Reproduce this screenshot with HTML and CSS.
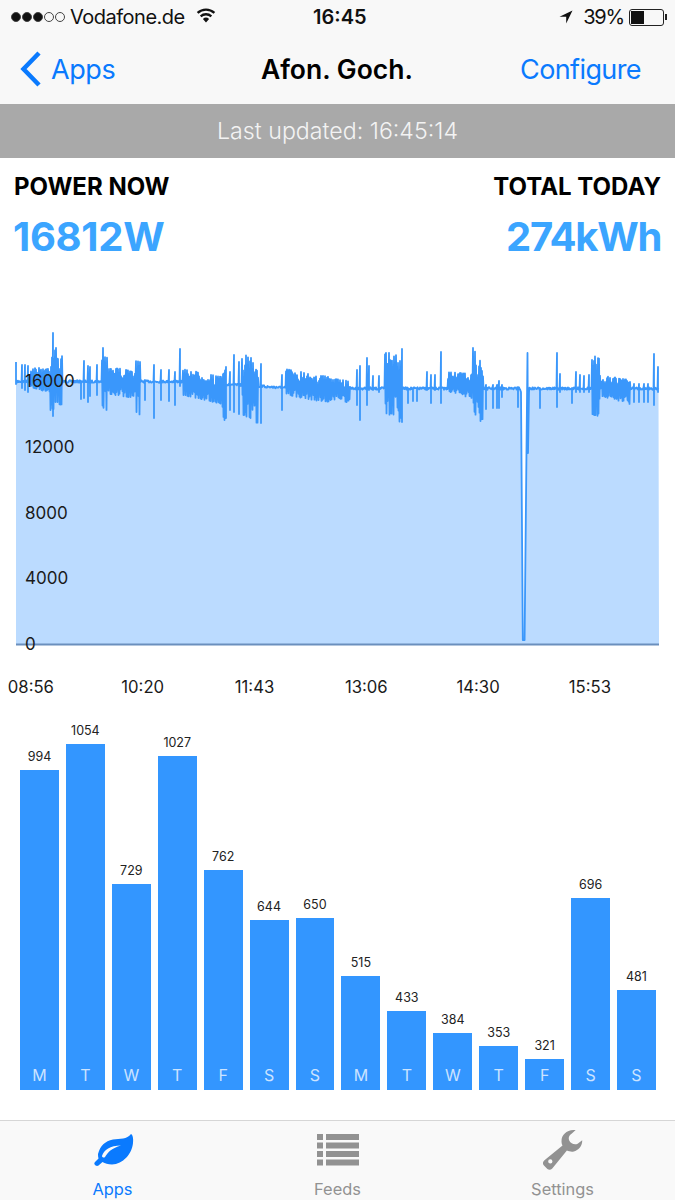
FILE: index.html
```html
<!DOCTYPE html>
<html lang="en">
<head>
    <meta charset="UTF-8">
    <meta name="viewport" content="width=device-width, initial-scale=1.0">
    <title>Afon. Goch.</title>
    <link rel="stylesheet" href="styles.css">
</head>
<body>
    <div class="screen">
        <header class="top-bar">
            <div class="status-bar">
                <div class="status-left">
                    <span class="signal"><i class="on"></i><i class="on"></i><i class="on"></i><i></i><i></i></span>
                    <span class="carrier">Vodafone.de</span>
                    <svg class="wifi" viewBox="0 0 20 15"><path d="M10 14.500 6.900 10.900a4.600 4.600 0 0 1 6.200 0zM5.400 9.200 3.900 7.500a9 9 0 0 1 12.200 0l-1.500 1.700a6.800 6.800 0 0 0-9.200 0zM2.400 5.800 .8 4a13.600 13.600 0 0 1 18.400 0l-1.600 1.800a11.300 11.300 0 0 0-15.200 0z"/></svg>
                </div>
                <div class="status-time">16:45</div>
                <div class="status-right">
                    <svg class="arrow" viewBox="0 0 14 14"><path d="M13.500 .5 .5 6.800h6.700v6.700z"/></svg>
                    <span>39%</span>
                    <span class="battery"><span class="battery-level"></span></span>
                </div>
            </div>
            <nav class="nav-bar">
                <a class="nav-back">
                    <svg class="chevron" viewBox="0 0 22 36"><path d="M19 2 3.500 18 19 34"/></svg>
                    <span>Apps</span>
                </a>
                <h1 class="nav-title">Afon. Goch.</h1>
                <a class="nav-action">Configure</a>
            </nav>
        </header>

        <div class="updated">Last updated: 16:45:14</div>

        <section class="stats">
            <div class="stat">
                <div class="stat-label">POWER NOW</div>
                <div class="stat-value">16812W</div>
            </div>
            <div class="stat stat-right">
                <div class="stat-label">TOTAL TODAY</div>
                <div class="stat-value">274kWh</div>
            </div>
        </section>

        <section class="power-chart">
            <svg class="power-svg" viewBox="0 325 675 325">
                <path id="powerArea" class="power-area"></path>
                <path id="powerLine" class="power-line"></path>
                <path class="power-axis" d="M16 644.500H659"></path>
            </svg>
            <span class="y-label y-16000">16000</span>
            <span class="y-label y-12000">12000</span>
            <span class="y-label y-8000">8000</span>
            <span class="y-label y-4000">4000</span>
            <span class="y-label y-0">0</span>
        </section>

        <div class="x-axis">
            <span>08:56</span>
            <span>10:20</span>
            <span>11:43</span>
            <span>13:06</span>
            <span>14:30</span>
            <span>15:53</span>
        </div>

        <section class="bars">
            <div class="bar-col"><span class="bar-value">994</span><div class="bar" style="height: 320px">M</div></div>
            <div class="bar-col"><span class="bar-value">1054</span><div class="bar" style="height: 346px">T</div></div>
            <div class="bar-col"><span class="bar-value">729</span><div class="bar" style="height: 206px">W</div></div>
            <div class="bar-col"><span class="bar-value">1027</span><div class="bar" style="height: 334px">T</div></div>
            <div class="bar-col"><span class="bar-value">762</span><div class="bar" style="height: 220px">F</div></div>
            <div class="bar-col"><span class="bar-value">644</span><div class="bar" style="height: 170px">S</div></div>
            <div class="bar-col"><span class="bar-value">650</span><div class="bar" style="height: 172px">S</div></div>
            <div class="bar-col"><span class="bar-value">515</span><div class="bar" style="height: 114px">M</div></div>
            <div class="bar-col"><span class="bar-value">433</span><div class="bar" style="height: 79px">T</div></div>
            <div class="bar-col"><span class="bar-value">384</span><div class="bar" style="height: 57px">W</div></div>
            <div class="bar-col"><span class="bar-value">353</span><div class="bar" style="height: 44px">T</div></div>
            <div class="bar-col"><span class="bar-value">321</span><div class="bar" style="height: 31px">F</div></div>
            <div class="bar-col"><span class="bar-value">696</span><div class="bar" style="height: 192px">S</div></div>
            <div class="bar-col"><span class="bar-value">481</span><div class="bar" style="height: 100px">S</div></div>
        </section>

        <footer class="tab-bar">
            <a class="tab tab-active">
                <svg class="tab-icon" viewBox="0 0 42 40"><path fill-rule="evenodd" d="M6 24C8 16 13 11 21 9.500 28 8.500 35 9.500 39 4c2 1 2.500 5 2 9-1 11-10 21-21 21.500-4 0-7-1-9.500-2.500l-4 3.500c-2.500 1.500-5.500-1.500-3.500-3.500l3.500-3.500C6 27 6 25.500 6 24zM10 26c2-6 8-10.500 19-10.500-9 2.500-13 6.500-16 11.500-1 1-3 .5-3-1z"/></svg>
                <span>Apps</span>
            </a>
            <a class="tab">
                <svg class="tab-icon" viewBox="0 0 42 32">
                    <path d="M0 0h6v6H0zM9 0h33v6H9zM0 8.500h6v6H0zM9 8.500h33v6H9zM0 17h6v6H0zM9 17h33v6H9zM0 25.500h6v6H0zM9 25.500h33v6H9z"/>
                </svg>
                <span>Feeds</span>
            </a>
            <a class="tab">
                <svg class="tab-icon" viewBox="0 0 42 41"><path fill-rule="evenodd" d="M34 0C25-.5 19 5 19.500 12c0 1.500.5 3 1 4L2 31c-2 2-2 4-.5 5.500L5 40c1.500 1 3.500 1 5-.5L25 21c2 1 5 1.500 7 1 5-1 9-6 8.700-11.500L36 14c-3 1.500-7 0-8.500-3-1.500-3 0-6 2-7zM8 30a2.200 2.200 0 1 1 0 4.400A2.200 2.200 0 0 1 8 30z"/></svg>
                <span>Settings</span>
            </a>
        </footer>
    </div>

    <script src="chart.js"></script>
</body>
</html>
```

FILE: styles.css
```css
body {
    font-family: Inter, "Noto Sans", sans-serif;
    margin: 0;
    background-color: #fff;
    color: #000;
}

.screen {
    width: 675px;
    height: 1200px;
    display: flex;
    flex-direction: column;
    overflow: hidden;
}

/* status + nav */
.top-bar {
    background-color: #f8f8f8;
    height: 104px;
}

.status-bar {
    height: 34px;
    display: flex;
    align-items: center;
    justify-content: space-between;
    padding: 0 11px;
    position: relative;
    font-size: 20px;
    color: #111;
}

.status-left,
.status-right {
    display: flex;
    align-items: center;
}

.signal {
    display: flex;
    gap: 1px;
    margin-right: 5px;
}

.signal i {
    width: 10px;
    height: 10px;
    border: 1px solid #444;
    border-radius: 50%;
    box-sizing: border-box;
}

.signal i.on {
    background-color: #111;
}

.carrier {
    letter-spacing: -0.5px;
}

.wifi {
    width: 20px;
    height: 15px;
    margin-left: 11px;
    margin-top: -4px;
    fill: #111;
}

.status-time {
    position: absolute;
    left: 313px;
    font-weight: 600;
    font-size: 20px;
}

.arrow {
    width: 14px;
    height: 14px;
    margin-right: 10px;
    fill: #111;
}

.status-right span:nth-child(2) {
    letter-spacing: -1.2px;
    font-size: 20px;
}

.battery {
    width: 35px;
    height: 17px;
    margin-left: 5px;
    border: 1px solid #222;
    border-radius: 3px;
    box-sizing: border-box;
    padding: 1px;
    display: block;
    position: relative;
}

.battery::after {
    content: "";
    position: absolute;
    right: -4px;
    top: 4px;
    width: 2px;
    height: 6px;
    background-color: #222;
}

.battery-level {
    display: block;
    width: 13px;
    height: 100%;
    background-color: #111;
}

.nav-bar {
    height: 70px;
    display: flex;
    align-items: center;
    justify-content: space-between;
    padding: 0 34px 0 20px;
    position: relative;
    font-size: 27px;
    color: #0a7afe;
}

.nav-back {
    display: flex;
    align-items: center;
    gap: 9px;
    letter-spacing: -0.4px;
}

.nav-action {
    letter-spacing: -0.6px;
}

.chevron {
    width: 22px;
    height: 36px;
    fill: none;
    stroke: #0a7afe;
    stroke-width: 4.500;
}

.nav-title {
    position: absolute;
    left: 0;
    right: 1px;
    margin: 0;
    text-align: center;
    font-size: 26.5px;
    font-weight: 600;
    color: #000;
}

.updated {
    height: 54px;
    line-height: 54px;
    background-color: #a9a9a9;
    color: #f3f3f3;
    text-align: center;
    font-size: 23.2px;
    font-weight: 300;
}

/* headline numbers */
.stats {
    height: 167px;
    display: flex;
    justify-content: space-between;
    padding: 0 14px;
}

.stat-right {
    text-align: right;
}

.stat-label {
    margin-top: 15px;
    font-size: 24px;
    line-height: 28px;
    font-weight: 700;
}

.stat-value {
    margin-top: 13px;
    margin-left: -1px;
    font-size: 40px;
    line-height: 46px;
    font-weight: 700;
    letter-spacing: -0.3px;
    color: #3ba5ff;
}

.stat-right .stat-value {
    letter-spacing: -1.3px;
}

/* line chart */
.power-chart {
    position: relative;
    height: 325px;
}

.power-svg {
    display: block;
    width: 675px;
    height: 325px;
}

.power-area {
    fill: #bbdbff;
    stroke: none;
}

.power-line {
    fill: none;
    stroke: #3a97fb;
    stroke-width: 1.800;
    stroke-linejoin: round;
}

.power-axis {
    stroke: #6b8fbd;
    stroke-width: 2;
}

.y-label {
    position: absolute;
    left: 25px;
    font-size: 17px;
    line-height: 20px;
    color: #1a1a1a;
}

.y-16000 { top: 46px; }
.y-12000 { top: 112px; }
.y-8000 { top: 178px; }
.y-4000 { top: 243px; }
.y-0 { top: 309px; }

.x-axis {
    display: flex;
    margin: 27px 0 0 -25px;
    font-size: 16.7px;
    line-height: 20px;
    color: #1a1a1a;
}

.x-axis span {
    width: 111.8px;
    text-align: center;
}

/* daily bars */
.bars {
    height: 373px;
    margin-top: 20px;
    padding: 0 19px 0 20px;
    display: flex;
    align-items: flex-end;
    gap: 7px;
}

.bar-col {
    flex: 1;
    display: flex;
    flex-direction: column;
    align-items: center;
}

.bar-value {
    font-size: 12.5px;
    line-height: 16px;
    margin-bottom: 5px;
    color: #222;
}

.bar {
    width: 100%;
    background-color: #3396ff;
    color: rgba(255, 255, 255, 0.75);
    font-size: 16px;
    line-height: 20px;
    display: flex;
    align-items: flex-end;
    justify-content: center;
    padding-bottom: 5px;
    box-sizing: border-box;
}

/* tabs */
.tab-bar {
    margin-top: 30px;
    height: 80px;
    background-color: #f9f9f9;
    border-top: 1px solid #d6d6d6;
    box-sizing: border-box;
    display: flex;
}

.tab {
    flex: 1;
    display: flex;
    flex-direction: column;
    align-items: center;
    justify-content: flex-end;
    color: #929292;
    font-size: 16.4px;
    line-height: 20px;
    fill: #929292;
}

.tab span {
    margin-bottom: 1px;
}

.tab-active {
    color: #0a7afe;
    fill: #0a7afe;
}

.tab-icon {
    width: 42px;
    height: 40px;
    margin-bottom: 9px;
}
```

FILE: chart.js
```js
// bursts: [from, to, top at from, top at to, bottom at from, bottom at to]
const bursts = [
    [30, 50, 368, 368, 388, 392],
    [50, 56, 346, 346, 416, 416],
    [57, 62, 356, 356, 404, 405],
    [102, 107, 347, 347, 410, 411],
    [108, 135, 366, 372, 394, 398],
    [136, 140, 361, 361, 413, 415],
    [183, 222, 369, 377, 395, 404],
    [220, 225, 361, 361, 422, 424],
    [242, 258, 355, 357, 414, 426],
    [286, 335, 369, 378, 395, 404],
    [335, 350, 379, 381, 396, 404],
    [385, 402, 351, 355, 414, 424],
    [448, 472, 372, 374, 392, 398],
    [473, 483, 348, 366, 410, 429],
    [592, 600, 355, 359, 414, 418],
    [601, 630, 375, 380, 396, 404]
];

// single spikes: [x, top, bottom]
const spikes = [
    [16, 362, 384], [22, 365, 388], [25, 365, 390], [28, 366, 392], [53, 333, 416],
    [81, 381, 399], [84, 361, 398], [88, 366, 402], [90, 367, 396], [97, 365, 395],
    [145, 380, 400], [154, 365, 418], [161, 370, 400], [169, 370, 401], [175, 372, 405],
    [180, 349, 386], [226, 367, 418], [230, 372, 410], [234, 355, 412], [239, 362, 414],
    [261, 364, 423], [282, 375, 410], [357, 370, 405], [360, 366, 420], [367, 358, 405],
    [369, 366, 390], [373, 376, 390], [379, 376, 392], [402, 349, 422], [408, 388, 403],
    [413, 388, 401], [417, 388, 401], [427, 372, 390], [431, 375, 403], [435, 375, 390],
    [441, 352, 403], [486, 385, 409], [493, 385, 408], [497, 385, 408], [499, 381, 408],
    [502, 385, 397], [518, 387, 407], [540, 388, 408], [557, 353, 407], [560, 374, 392],
    [572, 388, 403], [576, 372, 392], [580, 375, 392], [584, 376, 392], [589, 375, 392],
    [634, 384, 402], [639, 384, 402], [644, 384, 402], [648, 384, 402], [654, 354, 405], [658, 367, 392]
];

// small repeatable noise so the trace is the same on every load
let seed = 7;
function noise() {
    seed = (seed * 16807) % 2147483647;
    return seed / 2147483647;
}

function baseAt(x) {
    if (x < 180) return 381.5;
    if (x < 285) return 381.5 + (x - 180) * 0.06;
    return 388.5;
}

function lerp(a, b, t) {
    return a + (b - a) * t;
}

const points = [];

for (let x = 16; x <= 658.5; x += 0.5) {
    // the dip is drawn by hand below
    if (x === 520.5) {
        points.push([521, 392], [522.8, 640], [524.6, 640], [527, 400], [527.5, 353], [528, 453], [529, 392]);
    }
    if (x >= 520.5 && x < 529.5) continue;

    const burst = bursts.find(b => x >= b[0] && x <= b[1]);
    const spike = spikes.find(s => s[0] === x);

    if (spike) {
        points.push([x, spike[1]], [x, spike[2]], [x, baseAt(x)]);
    } else if (burst) {
        const t = (x - burst[0]) / (burst[1] - burst[0]);
        const top = lerp(burst[2], burst[3], t);
        const bottom = lerp(burst[4], burst[5], t);
        const up = x * 2 % 2 === 0;
        const r = noise();
        const jitter = r * r * (bottom - top) * 0.4;
        points.push([x, up ? top + jitter : bottom - jitter]);
    } else {
        points.push([x, baseAt(x) + (noise() - 0.5) * 2.5]);
    }
}

const line = points.map((p, i) => (i ? 'L' : 'M') + p[0] + ' ' + p[1].toFixed(1)).join('');
document.getElementById('powerLine').setAttribute('d', line);
document.getElementById('powerArea').setAttribute('d', line + 'L659 644L16 644Z');
```
